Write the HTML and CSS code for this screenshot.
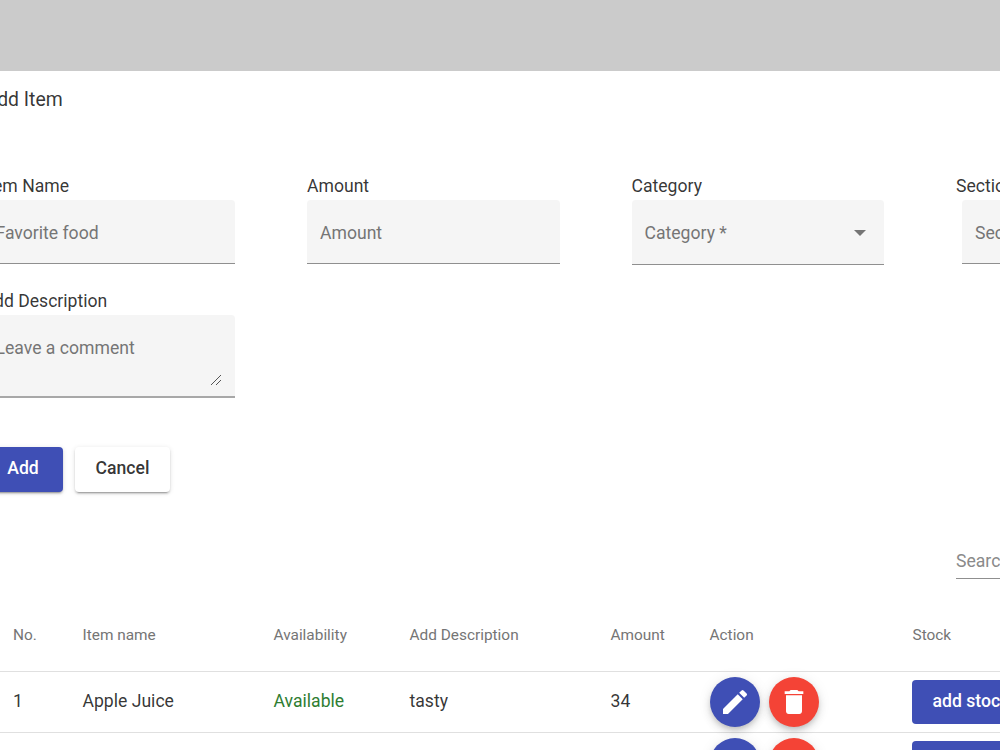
FILE: index.html
```html
<!DOCTYPE html>
<html lang="en">
<head>
<meta charset="utf-8">
<title>Add Item</title>
<link rel="stylesheet" href="styles.css">
</head>
<body>
<header class="topbar"></header>
<main class="page">
  <h1 class="title">Add Item</h1>
  <form class="form">
    <div class="row">
      <div class="field"><label class="label">Item Name</label><div class="box"><span class="ph">Favorite food</span></div></div>
      <div class="field"><label class="label">Amount</label><div class="box"><span class="ph">Amount</span></div></div>
      <div class="field"><label class="label">Category</label><div class="box box-select"><span class="ph ph-select">Category *</span><span class="caret"></span></div></div>
      <div class="field"><label class="label">Section</label><div class="box box-shift"><span class="ph">Section</span></div></div>
    </div>
    <div class="field desc"><label class="label">Add Description</label>
      <div class="box box-area"><span class="ph">Leave a comment</span>
        <svg class="grip" viewBox="0 0 12 12" width="12" height="12"><path d="M1 11 L11 1 M6 11 L11 6" stroke="#555" stroke-width="1" fill="none"/></svg>
      </div>
    </div>
    <div class="actions">
      <button type="button" class="btn btn-primary">Add</button>
      <button type="button" class="btn btn-plain">Cancel</button>
    </div>
  </form>
  <div class="search-row"><div class="search">Search</div></div>
  <table class="table">
    <thead>
      <tr>
        <th class="c-no">No.</th><th class="c-name">Item name</th><th class="c-av">Availability</th><th class="c-desc">Add Description</th><th class="c-am">Amount</th><th class="c-act">Action</th><th class="c-st">Stock</th>
      </tr>
    </thead>
    <tbody>
      <tr>
        <td>1</td><td>Apple Juice</td><td class="ok">Available</td><td>tasty</td><td>34</td>
        <td class="cell-tools"><div class="fabs">
          <span class="fab fab-blue"><svg viewBox="0 0 24 24" width="32" height="32"><path fill="#fff" d="M3 17.25V21h3.75L17.81 9.94l-3.75-3.75L3 17.25zM20.71 7.04a1 1 0 0 0 0-1.41l-2.34-2.34a1 1 0 0 0-1.41 0l-1.83 1.83 3.75 3.75 1.83-1.83z"/></svg></span>
          <span class="fab fab-red"><svg viewBox="0 0 24 24" width="32" height="32"><path fill="#fff" d="M6 19c0 1.1.9 2 2 2h8c1.1 0 2-.9 2-2V7H6v12zM19 4h-3.5l-1-1h-5l-1 1H5v2h14V4z"/></svg></span>
        </div></td>
        <td class="cell-tools"><button type="button" class="stock">add stock</button></td>
      </tr>
      <tr>
        <td>2</td><td>Orange</td><td class="ok">Available</td><td>fresh</td><td>20</td>
        <td class="cell-tools"><div class="fabs">
          <span class="fab fab-blue"><svg viewBox="0 0 24 24" width="32" height="32"><path fill="#fff" d="M3 17.25V21h3.75L17.81 9.94l-3.75-3.75L3 17.25zM20.71 7.04a1 1 0 0 0 0-1.41l-2.34-2.34a1 1 0 0 0-1.41 0l-1.83 1.83 3.75 3.75 1.83-1.83z"/></svg></span>
          <span class="fab fab-red"><svg viewBox="0 0 24 24" width="32" height="32"><path fill="#fff" d="M6 19c0 1.1.9 2 2 2h8c1.1 0 2-.9 2-2V7H6v12zM19 4h-3.5l-1-1h-5l-1 1H5v2h14V4z"/></svg></span>
        </div></td>
        <td class="cell-tools"><button type="button" class="stock">add stock</button></td>
      </tr>
    </tbody>
  </table>
</main>
</body>
</html>
```
FILE: styles.css
```css
* { box-sizing: border-box; }
html, body { margin: 0; padding: 0; width: 1000px; height: 750px; overflow: hidden; background: #fff; }
body { font-family: Roboto, "Liberation Sans", sans-serif; color: rgba(0,0,0,.8); }
.topbar { height: 71px; background: #cbcbcb; }
.page { width: 1400px; margin-left: -15.5px; }
.title { margin: 0; padding-top: 17px; height: 100px; font-size: 19.4px; font-weight: 400; line-height: 24px; }
.row { display: flex; gap: 72px; margin-left: -2px; }
.field { width: 252.5px; }
.label { display: block; font-size: 17.6px; line-height: 20px; height: 29px; padding-top: 5px; }
.box { position: relative; height: 64px; background: #f5f5f5; border-radius: 4px 4px 0 0; border-bottom: 1px solid #8f8f8f; padding: 3px 13px 0; display: flex; align-items: center; }
.box-select { height: 65px; justify-content: space-between; }
.ph-select { margin-top: -2px; }
.box-shift { margin-left: 6px; }
.ph { font-size: 17.6px; line-height: 20px; color: #757575; }
.caret { width: 0; height: 0; border-left: 6.5px solid transparent; border-right: 6.5px solid transparent; border-top: 6.5px solid #757575; margin-right: 5px; margin-top: -2px; }
.desc { margin-top: 21px; margin-left: -2px; }
.box-area { height: 83px; align-items: flex-start; padding-top: 23px; border-bottom-width: 2px; border-bottom-color: #a8a8a8; }
.grip { position: absolute; right: 13px; bottom: 10px; }
.actions { display: flex; gap: 12px; margin-top: 49px; margin-left: -1.5px; }
.btn { height: 45px; border: 0; padding: 0 0 4px; border-radius: 4px; font-family: inherit; font-size: 17.6px; font-weight: 500; box-shadow: 0 3px 1px -2px rgba(0,0,0,.2), 0 2px 2px rgba(0,0,0,.14), 0 1px 5px rgba(0,0,0,.12); }
.btn-primary { width: 80px; background: #3f4fb5; color: #fff; }
.btn-plain { width: 95px; background: #fff; color: rgba(0,0,0,.8); }
.search-row { padding-left: 971.5px; margin-top: 57px; }
.search { width: 200px; height: 30px; font-size: 17.6px; line-height: 25px; color: #8a8a8a; border-bottom: 1px solid #8f8f8f; }
.table { border-collapse: collapse; table-layout: fixed; width: 1125px; }
.table th, .table td { padding: 0; text-align: left; }
.table th { height: 92px; font-size: 15.4px; font-weight: 400; color: #757575; border-bottom: 1px solid #e0e0e0; padding-top: 20px; }
.table td { height: 61px; font-size: 17.6px; border-bottom: 1px solid #e0e0e0; padding-bottom: 2px; }
.table td.cell-tools { padding-bottom: 0; padding-top: 1px; }
.table th:first-child, .table td:first-child { padding-left: 28.5px; }
.c-no { width: 98px; }
.c-name { width: 191px; }
.c-av { width: 136px; }
.c-desc { width: 201px; }
.c-am { width: 99px; }
.c-act { width: 203px; }
.c-st { width: 200px; }
.ok { color: #2e7d32; }
.fabs { display: flex; gap: 9px; }
.fab { width: 50px; height: 50px; border-radius: 50%; display: flex; align-items: center; justify-content: center; box-shadow: 0 3px 5px -1px rgba(0,0,0,.15), 0 5px 8px rgba(0,0,0,.1), 0 1px 14px rgba(0,0,0,.08); }
.fab-blue { background: #3f4fb5; }
.fab-red { background: #f44336; }
.stock { height: 44px; width: 130px; border: 0; padding: 0 0 2px 21px; margin-left: -1px; text-align: left; border-radius: 4px; background: #3f4fb5; color: #fff; font-family: inherit; font-size: 17.6px; font-weight: 500; display: block; }
```
